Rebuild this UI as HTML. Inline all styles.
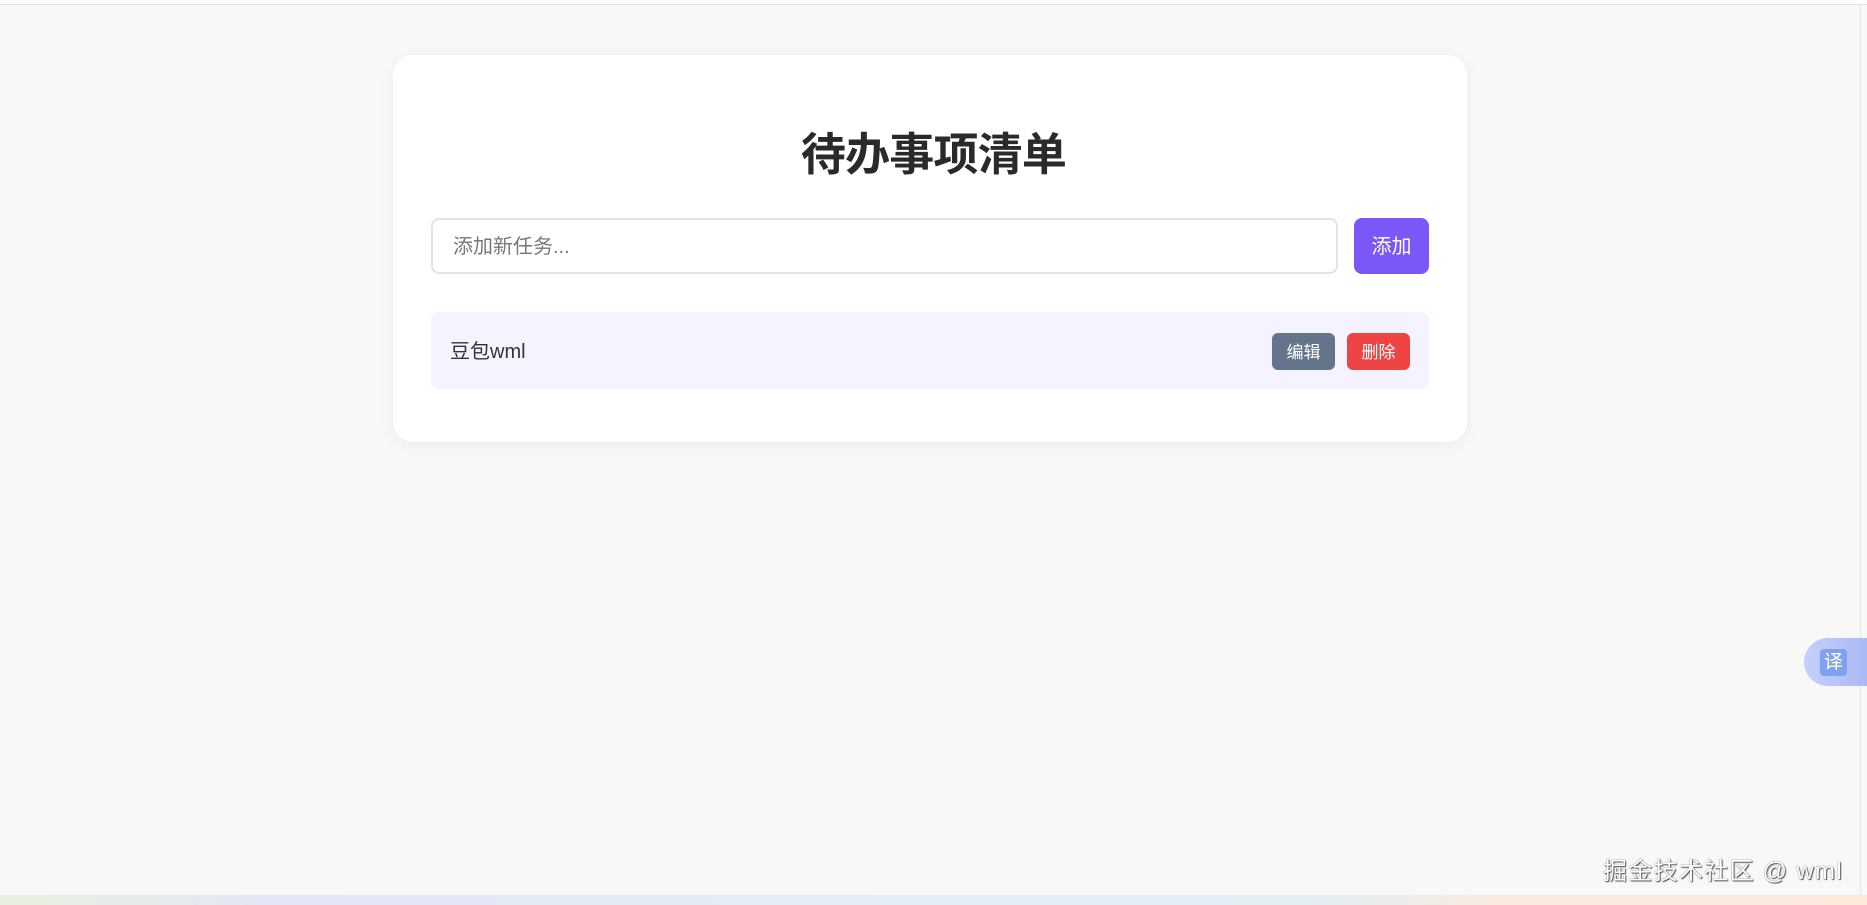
<!DOCTYPE html>
<html><head><meta charset="utf-8"><style>
*{box-sizing:border-box;margin:0;padding:0}
body{width:1867px;height:905px;overflow:hidden;background:#f8f8f9;font-family:"Liberation Sans","Noto Sans CJK SC",sans-serif;position:relative}
.top{position:absolute;left:0;top:0;width:1867px;height:5px;border-bottom:1px solid #e2e2e4;background:#fff}
.rline{position:absolute;left:1860px;top:5px;width:1px;height:890px;background:#e6e6e8}
.card{position:absolute;left:393px;top:55px;width:1074px;height:387px;background:#fff;border-radius:20px;box-shadow:0 4px 16px rgba(0,0,0,.05)}
h1{position:absolute;left:0;width:100%;top:128px;text-align:center;font-size:45px;font-weight:bold;color:#2a2a2a;line-height:54px;letter-spacing:-0.8px}
.in{position:absolute;left:431px;top:218px;width:907px;height:56px;border:2px solid #e3e3e6;border-radius:8px;background:#fff;font-size:20px;color:#777;padding-left:20px;line-height:54px}
.add{position:absolute;left:1354px;top:218px;width:75px;height:56px;background:#7b57f8;border-radius:8px;color:#fff;font-size:20px;text-align:center;line-height:58px}
.item{position:absolute;left:431px;top:312px;width:998px;height:77px;background:#f5f3ff;border-radius:8px;font-size:20px;color:#333;padding-left:19px;line-height:81px}
.b{position:absolute;top:333px;width:63px;height:37px;border-radius:6px;color:#fff;font-size:17px;text-align:center;line-height:39px}
.wm{position:absolute;left:1603px;top:851px;font-size:24px;color:#fff;text-shadow:0 0 1px #333,1px 1px 1px #555;letter-spacing:1.3px}
.tr{position:absolute;left:1804px;top:638px;width:63px;height:48px;border-radius:24px 0 0 24px;background:linear-gradient(90deg,#c7d0fb,#aab9f5)}
.tr span{position:absolute;left:16px;top:11px;width:27px;height:27px;border-radius:4px;background:#7fa2ee;color:#fff;font-size:19px;text-align:center;line-height:27px}
.bot{position:absolute;left:0;top:895px;width:1867px;height:10px;background:linear-gradient(90deg,#e8f1df,#e4e6f6 15%,#e4eef7 50%,#e3eef5 70%,#f8eadf 80%,#fbe9dc)}
</style></head><body>
<div class="top"></div><div class="rline"></div>
<div class="card"></div>
<h1>待办事项清单</h1>
<div class="in">添加新任务...</div>
<div class="add">添加</div>
<div class="item">豆包wml</div>
<div class="b" style="left:1272px;background:#64748b">编辑</div>
<div class="b" style="left:1347px;background:#ef4444">删除</div>
<div class="tr"><span>译</span></div>
<div class="wm">掘金技术社区 @ wml</div>
<div class="bot"></div>
</body></html>
